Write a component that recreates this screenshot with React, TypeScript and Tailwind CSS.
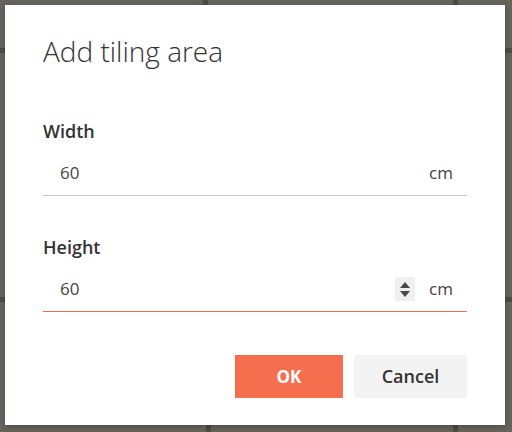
import React from "react";

function Spinner() {
  return (
    <div className="flex h-[24px] w-[20px] flex-col items-center justify-center gap-[3px] bg-[#f0f0f0]">
      <svg width="10" height="6" viewBox="0 0 10 6">
        <polygon points="5,0 10,6 0,6" fill="#4a4a4a" />
      </svg>
      <svg width="10" height="6" viewBox="0 0 10 6">
        <polygon points="0,0 10,0 5,6" fill="#4a4a4a" />
      </svg>
    </div>
  );
}

function Field({ label, focused }: { label: string; focused?: boolean }) {
  return (
    <div className="flex flex-col">
      <div className="text-[18px] font-semibold leading-[24px] text-[#333]">{label}</div>
      <div
        className={`mt-[12px] flex items-center border-b pb-[10px] pl-[17px] pr-[14px] pt-[6px] ${
          focused ? "border-[#e9704f]" : "border-[#c8c8c8]"
        }`}
      >
        <span className="flex-1 text-[17px] leading-[24px] text-[#444]">60</span>
        {focused && (
          <div className="mr-[14px]">
            <Spinner />
          </div>
        )}
        <span className="text-[17px] leading-[24px] text-[#444]">cm</span>
      </div>
    </div>
  );
}

export default function App() {
  return (
    <div
      className="relative flex h-[432px] w-[512px] items-start justify-start bg-[#67645d] p-[5px]"
      style={{ fontFamily: '"Open Sans", "Noto Sans", sans-serif' }}
    >
      <svg className="absolute inset-0" width="512" height="432">
        <rect x="203" y="0" width="5" height="6" fill="#4f4c46" />
        <rect x="453" y="0" width="5" height="6" fill="#4f4c46" />
        <rect x="0" y="48" width="5" height="5" fill="#4f4c46" />
        <rect x="0" y="297" width="5" height="5" fill="#4f4c46" />
        <rect x="505" y="48" width="7" height="5" fill="#4f4c46" />
        <rect x="505" y="297" width="7" height="5" fill="#4f4c46" />
        <rect x="206" y="425" width="5" height="7" fill="#4f4c46" />
        <rect x="453" y="425" width="5" height="7" fill="#4f4c46" />
      </svg>
      <div className="relative flex h-[420px] w-[500px] flex-col bg-white px-[38px] pt-[28px] shadow-[0_2px_6px_rgba(0,0,0,0.25)]">
        <h1 className="text-[28px] font-light leading-[36px] text-[#333]">Add tiling area</h1>
        <div className="mt-[50px]">
          <Field label="Width" />
        </div>
        <div className="mt-[39px]">
          <Field label="Height" focused />
        </div>
        <div className="mt-[43px] flex justify-end gap-[11px]">
          <button className="h-[43px] w-[108px] bg-[#f56e4e] text-[17px] font-bold text-white">OK</button>
          <button className="h-[43px] w-[113px] bg-[#f3f3f3] text-[18px] font-semibold text-[#333]">Cancel</button>
        </div>
      </div>
    </div>
  );
}
